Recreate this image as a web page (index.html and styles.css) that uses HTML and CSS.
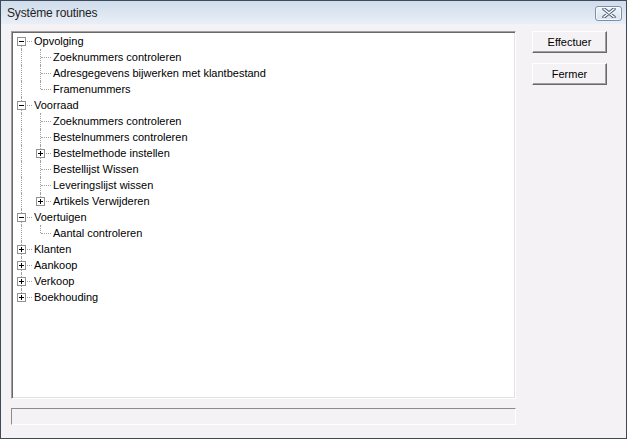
FILE: index.html
```html
<!DOCTYPE html>
<html>
<head>
<meta charset="utf-8">
<link rel="stylesheet" href="styles.css">
</head>
<body>
<div class="window">
  <div class="titlebar">
    <span class="title">Système routines</span>
    <span class="close"><svg width="14" height="10" viewBox="0 0 14 10"><path d="M2 1 L12 9 M12 1 L2 9" stroke="#4a5a6e" stroke-width="3.4" stroke-linecap="round"/><path d="M2 1 L12 9 M12 1 L2 9" stroke="#ffffff" stroke-width="1.6" stroke-linecap="round"/></svg></span>
  </div>
  <div class="client">
    <div class="leftcol">
      <div class="tree">
        <div class="row"><span class="c node first"><span class="box minus"></span></span><span class="label">Opvolging</span></div>
        <div class="row"><span class="c pass"></span><span class="c node mid"></span><span class="label">Zoeknummers controleren</span></div>
        <div class="row"><span class="c pass"></span><span class="c node mid"></span><span class="label">Adresgegevens bijwerken met klantbestand</span></div>
        <div class="row"><span class="c pass"></span><span class="c node end"></span><span class="label">Framenummers</span></div>
        <div class="row"><span class="c node mid"><span class="box minus"></span></span><span class="label">Voorraad</span></div>
        <div class="row"><span class="c pass"></span><span class="c node mid"></span><span class="label">Zoeknummers controleren</span></div>
        <div class="row"><span class="c pass"></span><span class="c node mid"></span><span class="label">Bestelnummers controleren</span></div>
        <div class="row"><span class="c pass"></span><span class="c node mid"><span class="box plus"></span></span><span class="label">Bestelmethode instellen</span></div>
        <div class="row"><span class="c pass"></span><span class="c node mid"></span><span class="label">Bestellijst Wissen</span></div>
        <div class="row"><span class="c pass"></span><span class="c node mid"></span><span class="label">Leveringslijst wissen</span></div>
        <div class="row"><span class="c pass"></span><span class="c node end"><span class="box plus"></span></span><span class="label">Artikels Verwijderen</span></div>
        <div class="row"><span class="c node mid"><span class="box minus"></span></span><span class="label">Voertuigen</span></div>
        <div class="row"><span class="c pass"></span><span class="c node end"></span><span class="label">Aantal controleren</span></div>
        <div class="row"><span class="c node mid"><span class="box plus"></span></span><span class="label">Klanten</span></div>
        <div class="row"><span class="c node mid"><span class="box plus"></span></span><span class="label">Aankoop</span></div>
        <div class="row"><span class="c node mid"><span class="box plus"></span></span><span class="label">Verkoop</span></div>
        <div class="row"><span class="c node end"><span class="box plus"></span></span><span class="label">Boekhouding</span></div>
      </div>
      <div class="status"></div>
    </div>
    <div class="rightcol">
      <button class="btn">Effectuer</button>
      <button class="btn">Fermer</button>
    </div>
  </div>
</div>
</body>
</html>
```

FILE: styles.css
```css
html, body {
  margin: 0;
  padding: 0;
}
body {
  width: 627px;
  height: 439px;
  overflow: hidden;
  font-family: "Liberation Sans", Arial, sans-serif;
  font-size: 11px;
  color: #000;
}
.window {
  box-sizing: border-box;
  width: 627px;
  height: 439px;
  border: 1px solid #3f4a56;
  background: #f5f2f5;
  display: flex;
  flex-direction: column;
}
.titlebar {
  height: 23px;
  flex: none;
  display: flex;
  align-items: center;
  justify-content: space-between;
  padding: 0 4px 0 6px;
  background: linear-gradient(#cfdcec, #dfe7f2 60%, #e9eff7);
}
.title {
  font-size: 12px;
  letter-spacing: -0.15px;
  color: #1e1e1e;
  padding-top: 1px;
}
.close {
  box-sizing: border-box;
  width: 27px;
  height: 15px;
  margin-top: 1px;
  border: 1px solid #7d8ea6;
  border-radius: 3px;
  background: linear-gradient(#eef3f9, #d9e3ef);
  box-shadow: inset 0 0 0 1px rgba(255,255,255,0.7);
  display: flex;
  align-items: center;
  justify-content: center;
}
.close svg {
  display: block;
}
.client {
  flex: 1;
  display: flex;
  padding: 7px 0 0 10px;
}
.leftcol {
  display: flex;
  flex-direction: column;
  width: 505px;
}
.tree {
  box-sizing: border-box;
  height: 368px;
  background: #fff;
  border-style: solid;
  border-width: 1px;
  border-color: #a0a0a0 #ffffff #ffffff #a0a0a0;
  box-shadow: inset 1px 1px 0 #696969, inset -1px -1px 0 #e3e3e3;
  padding: 1px 0 0 1px;
}
.row {
  display: flex;
  height: 16px;
  align-items: center;
}
.c {
  position: relative;
  width: 19px;
  height: 16px;
  flex: none;
}
.c.pass::before,
.c.node::before {
  content: "";
  position: absolute;
  left: 8px;
  border-left: 1px dotted #a0a0a0;
}
.c.pass::before {
  top: 0;
  bottom: 0;
}
.c.node.mid::before {
  top: 0;
  bottom: 0;
}
.c.node.end::before {
  top: 0;
  height: 8px;
}
.c.node.first::before {
  top: 8px;
  bottom: 0;
}
.c.node::after {
  content: "";
  position: absolute;
  left: 9px;
  top: 8px;
  width: 10px;
  border-top: 1px dotted #a0a0a0;
}
.box {
  position: absolute;
  z-index: 1;
  left: 4px;
  top: 4px;
  box-sizing: border-box;
  width: 9px;
  height: 9px;
  border: 1px solid #919191;
  background: #fff;
}
.box::before {
  content: "";
  position: absolute;
  left: 1px;
  top: 3px;
  width: 5px;
  height: 1px;
  background: #000;
}
.box.plus::after {
  content: "";
  position: absolute;
  left: 3px;
  top: 1px;
  width: 1px;
  height: 5px;
  background: #000;
}
.label {
  padding-left: 2px;
  line-height: 16px;
  white-space: nowrap;
}
.status {
  box-sizing: border-box;
  margin-top: 9px;
  height: 17px;
  border-style: solid;
  border-width: 1px;
  border-color: #8c8c8c #ffffff #ffffff #8c8c8c;
}
.rightcol {
  display: flex;
  flex-direction: column;
  gap: 10px;
  padding-left: 16px;
}
.btn {
  box-sizing: border-box;
  width: 75px;
  height: 22px;
  margin: 0;
  padding: 0;
  font-family: "Liberation Sans", Arial, sans-serif;
  font-size: 11px;
  color: #000;
  background: #f5f2f5;
  border-style: solid;
  border-width: 1px;
  border-color: #ffffff #696969 #696969 #ffffff;
  box-shadow: inset -1px -1px 0 #a0a0a0;
  border-radius: 0;
}
```
